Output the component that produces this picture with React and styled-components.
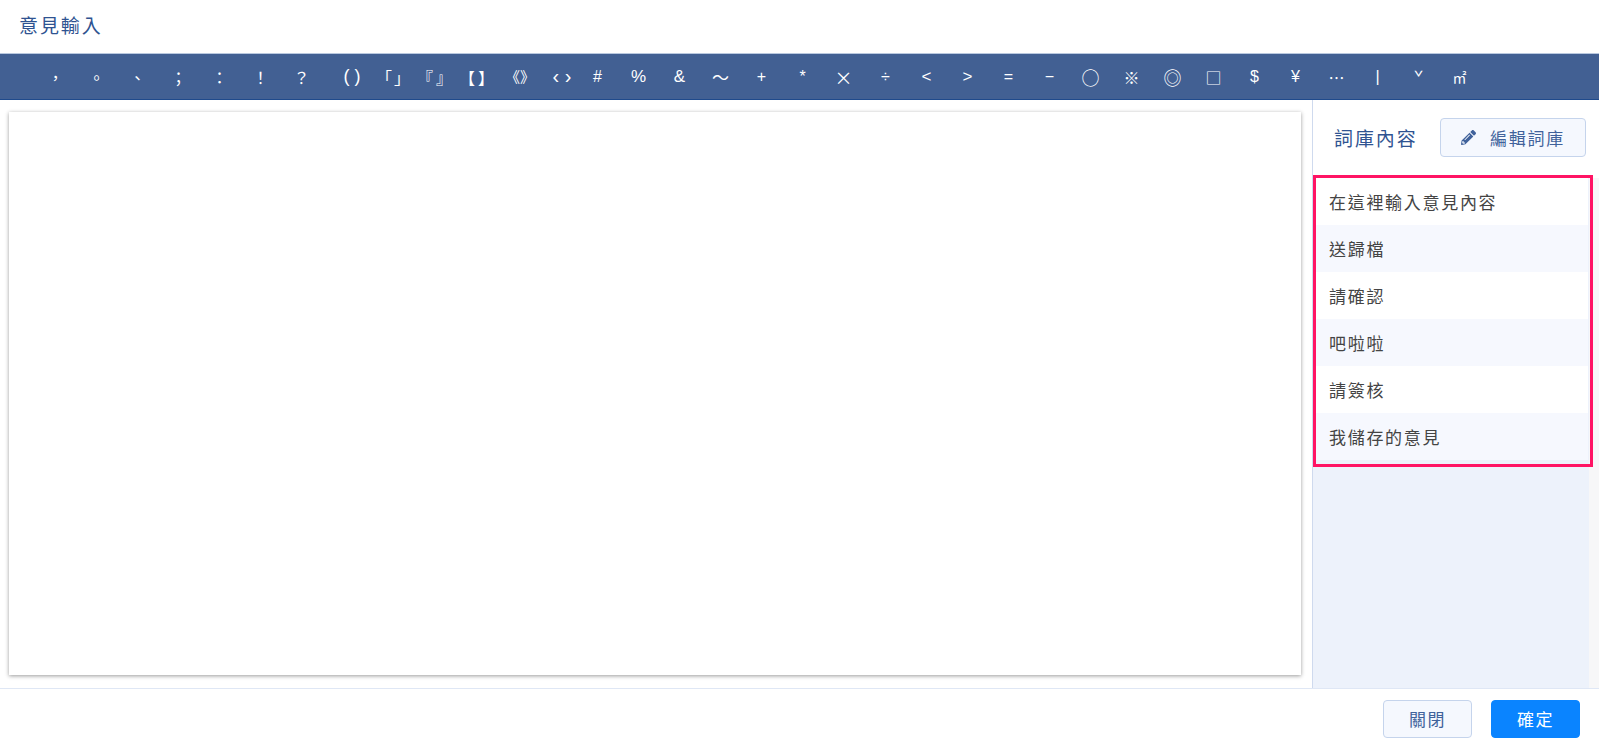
import React from "react";
import styled, { createGlobalStyle } from "styled-components";
import { FaPencilAlt } from "react-icons/fa";

const GlobalStyle = createGlobalStyle`
  html, body {
    margin: 0;
    padding: 0;
    background: #fff;
    font-family: "Liberation Sans", "Noto Sans CJK TC", sans-serif;
  }
`;

const Page = styled.div`
  position: relative;
  width: 1599px;
  height: 742px;
  display: flex;
  flex-direction: column;
  overflow: hidden;
`;

const Header = styled.div`
  height: 53px;
  box-sizing: border-box;
  padding: 0 0 5px 19px;
  display: flex;
  align-items: center;
`;

const Title = styled.div`
  color: #2f5391;
  font-size: 19px;
  letter-spacing: 1.9px;
`;

const SymbolBar = styled.div`
  height: 47px;
  box-sizing: border-box;
  padding-left: 35px;
  display: flex;
  align-items: center;
  background: #426093;
  border-top: 1px solid #b9c8df;
  border-bottom: 1px solid #1f4a8c;
`;

const SymbolKey = styled.span`
  flex: none;
  width: ${(p) => (p.$pair ? "42px" : "41px")};
  margin-left: ${(p) => p.$shift || 0}px;
  text-align: center;
  color: #fff;
  font-family: ${(p) => (p.$cjk ? '"Noto Sans CJK TC", sans-serif' : "inherit")};
  font-size: ${(p) => p.$size || 16}px;
  white-space: nowrap;
  letter-spacing: ${(p) => p.$track || 0}px;
`;

const Body = styled.div`
  flex: 1;
  display: flex;
  min-height: 0;
`;

const EditorArea = styled.div`
  flex: none;
  width: 1312px;
  box-sizing: border-box;
  padding: 12px 11px 13px 9px;
`;

const EditorSheet = styled.div`
  height: 100%;
  background: #fff;
  box-shadow: 0 1px 4px rgba(0, 0, 0, 0.4);
`;

const SidePanel = styled.div`
  flex: 1;
  display: flex;
  flex-direction: column;
  background: #edf2fb;
  border-left: 1px solid #cfdaee;
  border-right: 10px solid #f7f7f8;
`;

const SideHead = styled.div`
  height: 78px;
  flex: none;
  box-sizing: border-box;
  margin-right: -10px;
  padding: 0 13px 3px 21px;
  display: flex;
  align-items: center;
  justify-content: space-between;
  background: #fff;
`;

const SideTitle = styled.div`
  color: #2f5391;
  font-size: 19px;
  letter-spacing: 1.9px;
`;

const EditButton = styled.button`
  width: 146px;
  height: 39px;
  display: flex;
  align-items: center;
  justify-content: center;
  gap: 14px;
  color: #40629b;
  background: #f5f8fe;
  border: 1px solid #c5d4ec;
  border-radius: 4px;
  font: inherit;
  font-size: 17px;
  letter-spacing: 1.8px;
  svg {
    font-size: 15px;
  }
`;

const PhraseList = styled.div`
  margin: 0 1px 0 3px;
`;

const PhraseRow = styled.div`
  height: 47px;
  box-sizing: border-box;
  padding-left: 13px;
  display: flex;
  align-items: center;
  color: #444;
  background: ${(p) => (p.$alt ? "#f6f8fe" : "#fff")};
  font-size: 17px;
  letter-spacing: 1.7px;
`;

const Highlight = styled.div`
  position: absolute;
  left: 1313px;
  top: 175px;
  width: 280px;
  height: 292px;
  box-sizing: border-box;
  border: 3px solid #ff1464;
  pointer-events: none;
`;

const Footer = styled.div`
  height: 54px;
  flex: none;
  box-sizing: border-box;
  padding: 11px 19px 3px 0;
  display: flex;
  justify-content: flex-end;
  gap: 19px;
  border-top: 1px solid #dfe7f5;
`;

const FooterButton = styled.button`
  width: 89px;
  height: 38px;
  padding: 0 0 2px;
  color: ${(p) => (p.$primary ? "#fff" : "#40629b")};
  background: ${(p) => (p.$primary ? "#0a84ff" : "#f5f8fe")};
  border: 1px solid ${(p) => (p.$primary ? "#0a84ff" : "#c5d4ec")};
  border-radius: 4px;
  font: inherit;
  font-size: 17px;
  letter-spacing: 1.4px;
`;

const symbols = [
  { t: "，" }, { t: "。" }, { t: "、" }, { t: "；" }, { t: "：" }, { t: "！" }, { t: "？" },
  { t: "( )", pair: true, shift: 9, size: 18 }, { t: "「」", pair: true, track: 2 },
  { t: "『』", pair: true, track: 3 }, { t: "【】", pair: true, track: 3 },
  { t: "《》", pair: true, track: 0, size: 15 }, { t: "‹ ›", pair: true, size: 20 },
  { t: "#", shift: -6 }, { t: "%", size: 17 }, { t: "&", size: 17 }, { t: "～", size: 17 },
  { t: "+" }, { t: "*" }, { t: "×", size: 18, cjk: true }, { t: "÷", shift: 1 },
  { t: "<", size: 17 }, { t: ">", size: 17 }, { t: "=" }, { t: "−" },
  { t: "○", size: 18, cjk: true }, { t: "※" }, { t: "◎", size: 18, cjk: true },
  { t: "□", size: 16, cjk: true }, { t: "$" }, { t: "¥" }, { t: "⋯" }, { t: "|" },
  { t: "ˇ", size: 16, cjk: true }, { t: "㎡", size: 14 },
];

const phrases = ["在這裡輸入意見內容", "送歸檔", "請確認", "吧啦啦", "請簽核", "我儲存的意見"];

export default function App() {
  return (
    <Page>
      <GlobalStyle />
      <Header>
        <Title>意見輸入</Title>
      </Header>
      <SymbolBar>
        {symbols.map((s) => (
          <SymbolKey key={s.t} $pair={s.pair} $shift={s.shift} $size={s.size} $track={s.track} $cjk={s.cjk}>
            {s.t}
          </SymbolKey>
        ))}
      </SymbolBar>
      <Body>
        <EditorArea>
          <EditorSheet />
        </EditorArea>
        <SidePanel>
          <SideHead>
            <SideTitle>詞庫內容</SideTitle>
            <EditButton>
              <FaPencilAlt />
              編輯詞庫
            </EditButton>
          </SideHead>
          <PhraseList>
            {phrases.map((p, i) => (
              <PhraseRow key={p} $alt={i % 2 === 1}>
                {p}
              </PhraseRow>
            ))}
          </PhraseList>
        </SidePanel>
      </Body>
      <Footer>
        <FooterButton>關閉</FooterButton>
        <FooterButton $primary>確定</FooterButton>
      </Footer>
      <Highlight />
    </Page>
  );
}
